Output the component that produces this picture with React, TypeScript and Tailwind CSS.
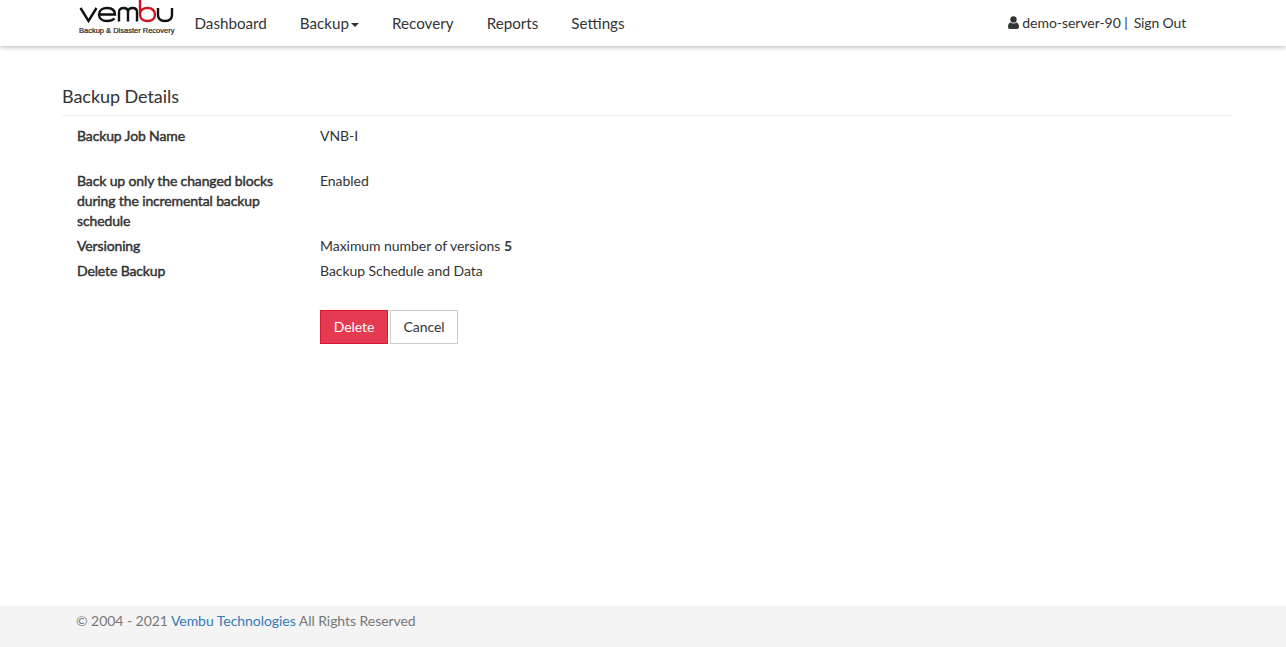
import React from "react";

function Logo() {
  return (
    <div className="flex w-[96px] flex-col items-start self-start">
      <svg width="96" height="25" viewBox="0 0 96 25" className="block" fill="none" strokeWidth="2.4">
        <path d="M1.5 8 L9.5 21 L17.5 8" stroke="#111" />
        <path d="M20 14.5 H36 C36 10.5 33 8 28 8 C23.5 8 20 10.5 20 14.5 C20 18.5 23.5 21 28 21 C31 21 33.8 20.2 35.5 18.5" stroke="#111" />
        <path d="M40 21.5 V12 C40 9 42 8 44.5 8 C47 8 49 9 49 12 V21.5 M49 12 C49 9 51 8 53.5 8 C56 8 58 9 58 12 V21.5" stroke="#111" />
        <path d="M61 0 V14.5 C61 18.5 64 21 68.5 21 C73 21 76 18.5 76 14.5 C76 10.5 73 8 68.5 8 C64 8 61 10.5 61 14.5" stroke="#d2121f" />
        <path d="M79 8 V15 C79 19 82 21 86 21 C90 21 93 19 93 15 V8" stroke="#111" />
      </svg>
      <span className="mt-[1px] whitespace-nowrap font-['Liberation_Sans',sans-serif] text-[7.5px] leading-[9px] font-normal tracking-normal text-[#222] [-webkit-text-stroke:0.2px_#222]">
        Backup &amp; Disaster Recovery
      </span>
    </div>
  );
}

function Caret() {
  return <span className="ml-[2px] inline-block h-0 w-0 border-x-4 border-t-4 border-x-transparent border-t-[#333] align-middle" />;
}

function UserIcon() {
  return (
    <svg width="11" height="13" viewBox="0 0 11 13" className="mr-[3px] inline-block align-[-1px]" fill="#333">
      <circle cx="5.5" cy="3.5" r="3.2" />
      <path d="M0 11 C0 8.5 1 6.8 2.6 6.5 C3.4 7.2 4.4 7.6 5.5 7.6 C6.6 7.6 7.6 7.2 8.4 6.5 C10 6.8 11 8.5 11 11 C11 12.2 10.2 13 9 13 H2 C0.8 13 0 12.2 0 11 Z" />
    </svg>
  );
}

function Row({ label, children, className = "" }: { label: string; children: React.ReactNode; className?: string }) {
  return (
    <div className={`flex ${className}`}>
      <div className="w-[243px] shrink-0 pr-[30px] font-normal tracking-[-0.13px] [-webkit-text-stroke:0.45px_#333]">{label}</div>
      <div>{children}</div>
    </div>
  );
}

export default function App() {
  return (
    <div className="flex min-h-screen flex-col bg-white font-['Lato',sans-serif] text-[14px] leading-[20px] tracking-[-0.05px] text-[#333]">
      <header className="flex h-[46px] shrink-0 items-center bg-white pr-[100px] pl-[79px] shadow-[0_1px_5px_rgba(0,0,0,0.3)]">
        <Logo />
        <nav className="ml-[19.5px] flex gap-[33px] text-[15.2px] tracking-normal">
          <a>Dashboard</a>
          <a>Backup<Caret /></a>
          <a>Recovery</a>
          <a>Reports</a>
          <a>Settings</a>
        </nav>
        <div className="ml-auto whitespace-nowrap">
          <UserIcon />
          demo-server-90 |<span className="ml-[6px] tracking-[-0.15px]">Sign Out</span>
        </div>
      </header>

      <main className="ml-[54px] flex-1 pt-[38px] pr-[54px] pl-[8px]">
        <h1 className="border-b border-[#eee] pb-[6px] text-[18px] leading-[25px] font-normal">Backup Details</h1>
        <div className="px-[15px] pt-[10px]">
          <Row label="Backup Job Name" className="pb-[25px]">VNB-I</Row>
          <Row label="Back up only the changed blocks during the incremental backup schedule" className="pb-[5px]">Enabled</Row>
          <Row label="Versioning" className="pb-[5px]">
            Maximum number of versions <b>5</b>
          </Row>
          <Row label="Delete Backup">Backup Schedule and Data</Row>
          <div className="mt-[29px] flex gap-[2px] pl-[243px]">
            <button className="h-[34px] w-[68px] border border-[#dc1633] bg-[#e63a50] text-white">Delete</button>
            <button className="h-[34px] w-[68px] border border-[#ccc] bg-white">Cancel</button>
          </div>
        </div>
      </main>

      <footer className="h-[41px] shrink-0 bg-[#f4f4f4] pt-[5px] pl-[76px] text-[#777]">
        © 2004 - 2021 <a className="text-[#337ab7]">Vembu Technologies</a> All Rights Reserved
      </footer>
    </div>
  );
}
